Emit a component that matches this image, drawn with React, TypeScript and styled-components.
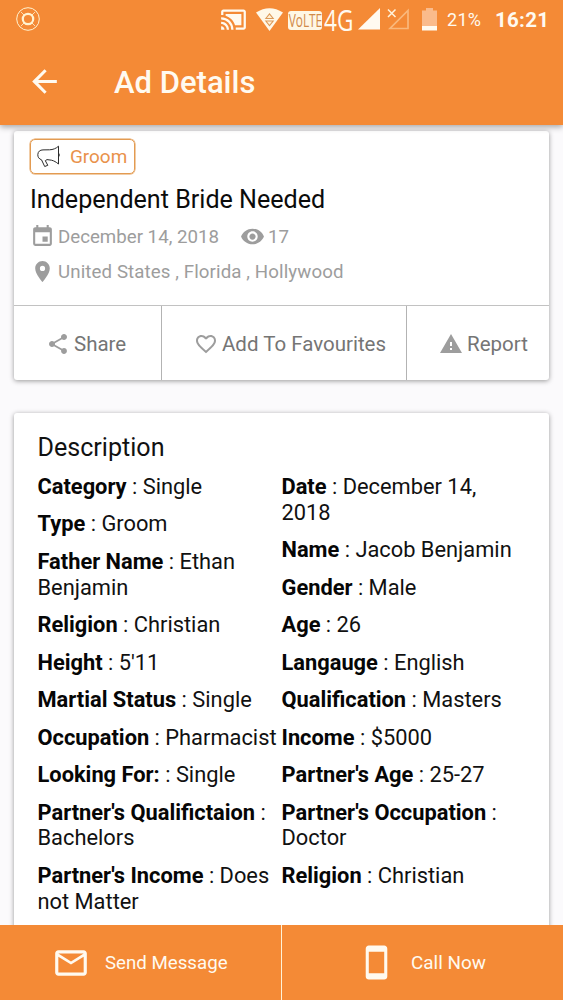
import React from 'react';
import styled, { createGlobalStyle } from 'styled-components';
import {
  MdArrowBack, MdCastConnected, MdEvent, MdFavoriteBorder, MdLocationOn,
  MdMailOutline, MdRemoveRedEye, MdShare, MdStayPrimaryPortrait, MdWarning,
} from 'react-icons/md';

const GlobalStyle = createGlobalStyle`
  * { box-sizing: border-box; }
  body { margin: 0; background: #fbfafc; }
  svg { display: block; flex: none; }
`;

const Screen = styled.div`
  width: 563px;
  height: 1000px;
  display: flex;
  flex-direction: column;
  overflow: hidden;
  background: #fbfafc;
  font-family: Roboto, sans-serif;
  color: #111;
`;

const Header = styled.header`
  height: 125px;
  flex: none;
  background: #f48a36;
  color: #fffaf0;
  box-shadow: 0 2px 6px rgba(0, 0, 0, 0.35);
  z-index: 1;
`;

const StatusBar = styled.div`
  height: 38px;
  padding-left: 16px;
  display: flex;
  align-items: center;
`;

const Slot = styled.div<{ $w: number }>`
  width: ${p => p.$w}px;
  flex: none;
  display: flex;
`;

const Label = styled.span<{ $size: number; $spacing?: number; $weight?: number; $color?: string }>`
  font-size: ${p => p.$size}px;
  letter-spacing: ${p => p.$spacing ?? 0}px;
  font-weight: ${p => p.$weight ?? 400};
  color: ${p => p.$color ?? 'inherit'};
  white-space: nowrap;
`;

const Clock = styled(Label)`
  padding-top: 2px;
`;

const TitleBar = styled.div`
  height: 87px;
  padding: 0 0 1px 26px;
  display: flex;
  align-items: center;
`;

const Title = styled.h1`
  margin: 4px 0 0 51px;
  font-size: 31px;
  line-height: 36px;
  font-weight: 500;
`;

const Content = styled.main`
  flex: 1;
  min-height: 0;
  padding: 6px 14px 0;
  overflow: hidden;
`;

const Card = styled.section`
  background: #fff;
  border-radius: 3px;
  box-shadow: 0 1px 5px rgba(0, 0, 0, 0.4);
`;

const Summary = styled(Card)`
  height: 249px;
  margin-bottom: 33px;
  display: flex;
  flex-direction: column;
`;

const SummaryInfo = styled.div`
  height: 174px;
  padding: 8px 16px 0;
`;

const Tag = styled.div`
  width: 105px;
  height: 35px;
  padding-left: 6px;
  display: flex;
  align-items: center;
  gap: 9px;
  border: 1.5px solid #e39b51;
  border-radius: 5px;
  color: #e9924b;
  box-shadow: 0 0 0 0.5px #e39b51;
`;

const AdTitle = styled.h2`
  margin: 11px 0 4px;
  font-size: 25.1px;
  line-height: 30px;
  font-weight: 400;
  color: #0b0b0b;
`;

const Meta = styled.div`
  height: 35px;
  display: flex;
  align-items: center;
  color: #9d9d9d;
`;

const Actions = styled.div`
  height: 75px;
  display: flex;
  border-top: 1.5px solid #c2c2c2;
`;

const Action = styled.div<{ $w: number; $pad: number }>`
  width: ${p => p.$w}px;
  padding: 1px 0 0 ${p => p.$pad}px;
  display: flex;
  align-items: center;
  gap: 4px;
  color: #9d9d9d;
  & + & { border-left: 1px solid #b3b3b3; }
`;

const Description = styled(Card)`
  height: 540px;
  padding: 19px 24px 0 23.5px;
`;

const Heading = styled.h3`
  margin: 0 0 11px;
  font-size: 25.1px;
  line-height: 31px;
  font-weight: 400;
`;

const Columns = styled.div`
  display: grid;
  grid-template-columns: 244px 243px;
`;

const Column = styled.div`
  display: flex;
  flex-direction: column;
  gap: 11.7px;
`;

const Field = styled.p`
  margin: 0;
  font-size: 21.83px;
  line-height: 25.8px;
  b { font-weight: 700; color: #060606; }
`;

const Footer = styled.footer`
  height: 75px;
  flex: none;
  display: flex;
  background: #f48a36;
  color: #fffaf0;
  z-index: 1;
`;

const FooterButton = styled.div<{ $w: number; $pad: number }>`
  width: ${p => p.$w}px;
  padding-left: ${p => p.$pad}px;
  display: flex;
  align-items: center;
  & + & { border-left: 1px solid #fff3d8; }
`;

const left = [
  ['Category', 'Single'], ['Type', 'Groom'], ['Father Name', 'Ethan Benjamin'],
  ['Religion', 'Christian'], ['Height', "5'11"], ['Martial Status', 'Single'],
  ['Occupation', 'Pharmacist'], ['Looking For:', 'Single'],
  ["Partner's Qualifictaion", 'Bachelors'], ["Partner's Income", 'Does not Matter'],
];
const right = [
  ['Date', 'December 14, 2018'], ['Name', 'Jacob Benjamin'], ['Gender', 'Male'],
  ['Age', '26'], ['Langauge', 'English'], ['Qualification', 'Masters'],
  ['Income', '$5000'], ["Partner's Age", '25-27'], ["Partner's Occupation", 'Doctor'],
  ['Religion', 'Christian'],
];

const Fields = ({ items }: { items: string[][] }) => (
  <Column>
    {items.map(([name, value]) => <Field key={name}><b>{name}</b> : {value}</Field>)}
  </Column>
);

const RecordIcon = () => (
  <svg width="24" height="24" viewBox="0 0 24 24" fill="none" stroke="#fff3d0">
    <circle cx="12" cy="12" r="11.3" strokeWidth="1" />
    <circle cx="12" cy="12" r="5.2" strokeWidth="2.2" />
    <path d="M5 5l3 3M19 5l-3 3M5 19l3-3M19 19l-3-3" strokeWidth=".8" />
  </svg>
);

const WifiIcon = () => (
  <svg width="27" height="23" viewBox="0 0 27 23">
    <path d="M0 4.5Q13.5-4 27 4.5L13.5 23z" fill="#fff8e8" />
    <path d="M9.8 10.5l3.7-4.7 3.7 4.7zM9.8 13l3.7 4.7 3.7-4.7z" fill="#fff0d5" stroke="#dc9a5a" strokeWidth="1.1" />
  </svg>
);

const Volte = styled.span`
  width: 34px;
  height: 19px;
  margin-top: 3px;
  display: flex;
  align-items: center;
  justify-content: center;
  border-radius: 3px;
  background: #fff7e5;
  color: #d18a4a;
  font: 500 18px/19px "Open Sans", sans-serif;
  span { transform: scaleX(0.66); }
`;

const Network = styled.span`
  width: 30px;
  height: 28px;
  margin-top: 2px;
  font: 400 29px/28px "Open Sans", sans-serif;
  white-space: nowrap;
  transform: scaleX(0.78);
  transform-origin: left;
`;

const SignalIcon = () => (
  <svg width="22" height="22" viewBox="0 0 22 22"><path d="M22 0v21.5H0z" fill="#fffaf0" /></svg>
);

const NoSignalIcon = () => (
  <svg width="23" height="22" viewBox="0 0 23 22" fill="none">
    <path d="M21 2.5v18H3z" stroke="#f9b87c" strokeWidth="1.7" />
    <path d="M1 1.5l7.5 7.5M8.5 1.5L1 9" stroke="#fff3dc" strokeWidth="1.5" />
  </svg>
);

const BatteryIcon = () => (
  <svg width="15" height="23" viewBox="0 0 15 23">
    <path d="M4 0h7v2.5h4V19H0V2.5h4z" fill="#fabb8c" />
    <path d="M0 18h15v4.5H0z" fill="#fffaf0" />
  </svg>
);

const MegaphoneIcon = () => (
  <svg width="24" height="23" viewBox="0 0 24 23" fill="none" stroke="#2b2b2b" strokeWidth="1" strokeLinejoin="round">
    <path d="M21.500 1.200V19C19 17 17 15.800 14.500 15.200L10 14.600L8.300 15.700L10.800 20.300L7.700 21.500L4.500 14.800C2 14 .7 12 .8 9.600C1 6.500 3 4.900 6 4.900L12.500 4.800C16 4.700 19 3.500 21.500 1.200zM21.500 8q1.700 2 0 4" />
  </svg>
);

export default function App() {
  return (
    <Screen>
      <GlobalStyle />
      <Header>
        <StatusBar>
          <Slot $w={204}><RecordIcon /></Slot>
          <Slot $w={36}><MdCastConnected size={27} /></Slot>
          <Slot $w={32}><WifiIcon /></Slot>
          <Slot $w={36}><Volte><span>VoLTE</span></Volte></Slot>
          <Slot $w={34}><Network>4G</Network></Slot>
          <Slot $w={29}><SignalIcon /></Slot>
          <Slot $w={35}><NoSignalIcon /></Slot>
          <Slot $w={25}><BatteryIcon /></Slot>
          <Slot $w={48}><Label $size={18} $spacing={0.3}>21%</Label></Slot>
          <Clock $size={20.5} $weight={700} $spacing={0.3}>16:21</Clock>
        </StatusBar>
        <TitleBar>
          <MdArrowBack size={37} />
          <Title>Ad Details</Title>
        </TitleBar>
      </Header>
      <Content>
        <Summary>
          <SummaryInfo>
            <Tag><MegaphoneIcon /><Label $size={18.9}>Groom</Label></Tag>
            <AdTitle>Independent Bride Needed</AdTitle>
            <Meta>
              <Slot $w={28}><MdEvent size={25} /></Slot>
              <Slot $w={182}><Label $size={18.7}>December 14, 2018</Label></Slot>
              <Slot $w={28}><MdRemoveRedEye size={25} /></Slot>
              <Label $size={18.7}>17</Label>
            </Meta>
            <Meta>
              <Slot $w={28}><MdLocationOn size={25} /></Slot>
              <Label $size={18.7} $spacing={0.1}>United States , Florida , Hollywood</Label>
            </Meta>
          </SummaryInfo>
          <Actions>
            <Action $w={147} $pad={32}><MdShare size={24} /><Label $size={20.5} $color="#757575">Share</Label></Action>
            <Action $w={245} $pad={32}><MdFavoriteBorder size={24} /><Label $size={20.5} $color="#757575">Add To Favourites</Label></Action>
            <Action $w={143} $pad={32}><MdWarning size={24} /><Label $size={20.5} $color="#757575">Report</Label></Action>
          </Actions>
        </Summary>
        <Description>
          <Heading>Description</Heading>
          <Columns><Fields items={left} /><Fields items={right} /></Columns>
        </Description>
      </Content>
      <Footer>
        <FooterButton $w={281} $pad={52}>
          <Slot $w={53}><MdMailOutline size={38} /></Slot><Label $size={18.7}>Send Message</Label>
        </FooterButton>
        <FooterButton $w={282} $pad={76}>
          <Slot $w={53}><MdStayPrimaryPortrait size={37} /></Slot><Label $size={18.9}>Call Now</Label>
        </FooterButton>
      </Footer>
    </Screen>
  );
}
